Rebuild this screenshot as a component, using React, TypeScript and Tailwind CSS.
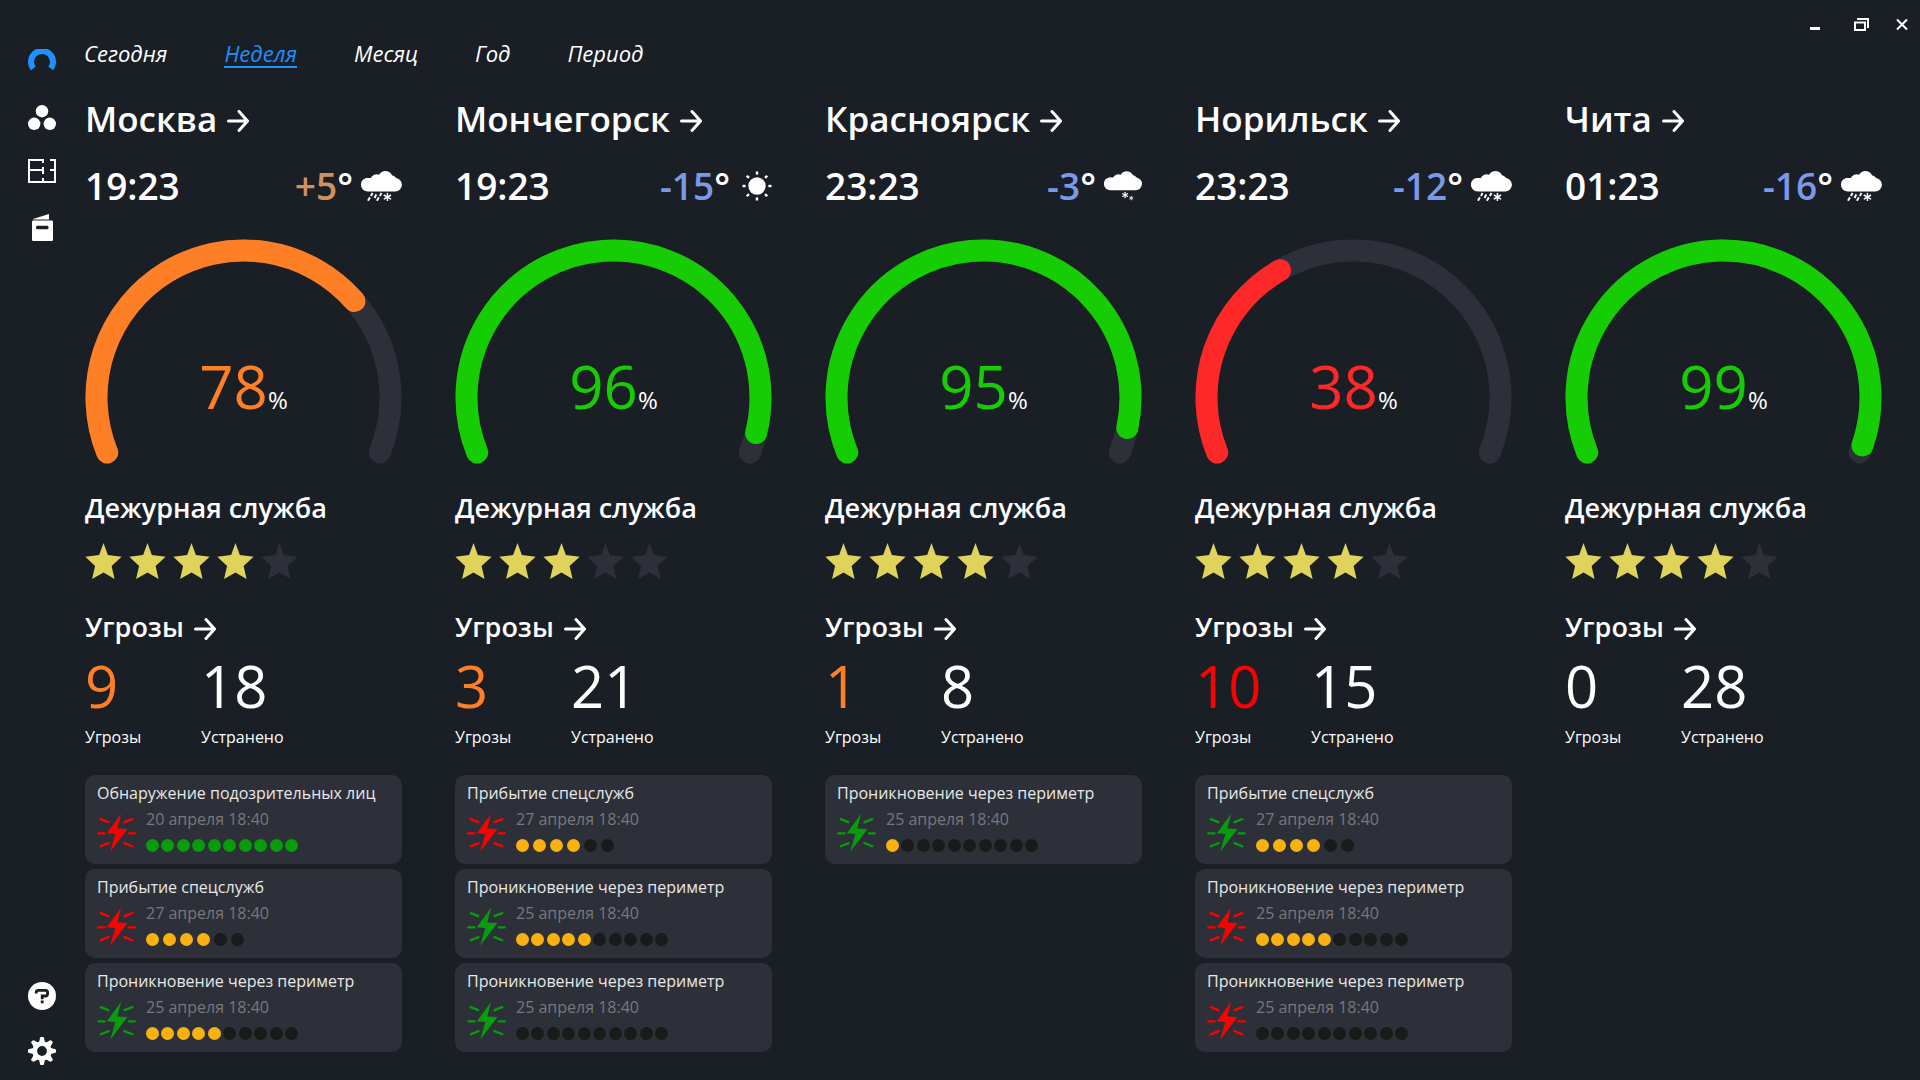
import React from "react";

type Weather = "sleet" | "snow" | "sun";
type Alert = { title: string; date: string; tone: "red" | "green"; total: number; filled: number; done?: boolean };
type City = {
  name: string;
  time: string;
  temp: string;
  warm?: boolean;
  weather: Weather;
  percent: number;
  sweep: number;
  level: "orange" | "green" | "red";
  stars: number;
  threats: number;
  threatColor: string;
  resolved: number;
  alerts: Alert[];
};

const perimeter = (tone: "red" | "green", filled: number): Alert => ({
  title: "Проникновение через периметр",
  date: "25 апреля 18:40",
  tone,
  total: 10,
  filled,
});
const arrival = (tone: "red" | "green"): Alert => ({
  title: "Прибытие спецслужб",
  date: "27 апреля 18:40",
  tone,
  total: 6,
  filled: 4,
});

const cities: City[] = [
  {
    name: "Москва", time: "19:23", temp: "+5", warm: true, weather: "sleet",
    percent: 78, sweep: 161, level: "orange", stars: 4,
    threats: 9, threatColor: "text-[#ff7f27]", resolved: 18,
    alerts: [
      { title: "Обнаружение подозрительных лиц", date: "20 апреля 18:40", tone: "red", total: 10, filled: 10, done: true },
      arrival("red"),
      perimeter("green", 5),
    ],
  },
  {
    name: "Мончегорск", time: "19:23", temp: "-15", weather: "sun",
    percent: 96, sweep: 216, level: "green", stars: 3,
    threats: 3, threatColor: "text-[#ff7f27]", resolved: 21,
    alerts: [arrival("red"), perimeter("green", 5), perimeter("green", 0)],
  },
  {
    name: "Красноярск", time: "23:23", temp: "-3", weather: "snow",
    percent: 95, sweep: 214, level: "green", stars: 4,
    threats: 1, threatColor: "text-[#ff7f27]", resolved: 8,
    alerts: [perimeter("green", 1)],
  },
  {
    name: "Норильск", time: "23:23", temp: "-12", weather: "sleet",
    percent: 38, sweep: 82, level: "red", stars: 4,
    threats: 10, threatColor: "text-[#ff0000]", resolved: 15,
    alerts: [arrival("green"), perimeter("red", 5), perimeter("red", 0)],
  },
  {
    name: "Чита", time: "01:23", temp: "-16", weather: "sleet",
    percent: 99, sweep: 221, level: "green", stars: 4,
    threats: 0, threatColor: "text-white", resolved: 28,
    alerts: [],
  },
];

const strokeByLevel = { orange: "stroke-[#ff7f27]", green: "stroke-[#16cc02]", red: "stroke-[#ff2828]" };
const textByLevel = { orange: "text-[#ff7f27]", green: "text-[#16cc02]", red: "text-[#ff2828]" };

function Arrow() {
  return (
    <svg viewBox="0 0 22 22" className="mt-1 size-[22px] shrink-0" fill="none" stroke="currentColor" strokeWidth="3" strokeLinecap="round" strokeLinejoin="round" aria-hidden="true">
      <path d="M1.5 11H20M12 1.5L20.5 11L12 20.5" />
    </svg>
  );
}

function Flake({ x, y, r }: { x: number; y: number; r: number }) {
  return (
    <g stroke="currentColor" strokeWidth={r / 2.4} strokeLinecap="round">
      {[30, 90, 150].map((a) => {
        const dx = r * Math.cos((a * Math.PI) / 180);
        const dy = r * Math.sin((a * Math.PI) / 180);
        return <line key={a} x1={x - dx} y1={y - dy} x2={x + dx} y2={y + dy} />;
      })}
    </g>
  );
}

function CloudShape() {
  return (
    <g>
      <rect x="0" y="21" width="124" height="41" rx="20.5" />
      <circle cx="20" cy="41" r="20" />
      <circle cx="47" cy="29" r="19" />
      <circle cx="74" cy="22" r="22" />
      <circle cx="92" cy="30" r="17" />
    </g>
  );
}

function WeatherIcon({ kind }: { kind: Weather }) {
  if (kind === "sun") {
    return (
      <svg viewBox="0 0 30 30" className="ml-1 size-[30px]" fill="currentColor" aria-label="Ясно">
        <circle cx="15" cy="15" r="8.7" />
        <g stroke="currentColor" strokeWidth="2.4">
          {[0, 45, 90, 135, 180, 225, 270, 315].map((a) => (
            <line key={a} x1="15" y1="0.5" x2="15" y2="3.6" transform={`rotate(${a} 15 15)`} />
          ))}
        </g>
      </svg>
    );
  }
  if (kind === "snow") {
    return (
      <svg viewBox="0 0 124 97" className="h-[30px] w-[38px]" fill="currentColor" aria-label="Снег">
        <CloudShape />
        <Flake x={69} y={78} r={9} />
        <Flake x={89} y={88} r={6} />
      </svg>
    );
  }
  return (
    <svg viewBox="0 0 124 91" className="h-[30px] w-[41px]" fill="currentColor" aria-label="Дождь со снегом">
      <CloudShape />
      <g stroke="currentColor" strokeWidth="6">
        <path d="M35 67L30 76M27 80L21 90M46 71L41 82M62 67L57 76M54 80L48 90" />
      </g>
      <Flake x={80} y={79} r={11} />
    </svg>
  );
}

const CX = 158.5;
const CY = 158.5;
const R = 147;
const point = (deg: number) => {
  const a = ((202 - deg) * Math.PI) / 180;
  return `${(CX + R * Math.cos(a)).toFixed(2)} ${(CY - R * Math.sin(a)).toFixed(2)}`;
};
const arc = (sweep: number) => `M${point(0)}A${R} ${R} 0 ${sweep > 180 ? 1 : 0} 1 ${point(sweep)}`;

function Gauge({ city }: { city: City }) {
  return (
    <div className="relative mt-[29px]">
      <svg viewBox="0 0 317 226" className="w-full" fill="none" strokeWidth="22" strokeLinecap="round" aria-hidden="true">
        <path d={arc(224)} className="stroke-[#2d3038]" />
        <path d={arc(city.sweep)} className={strokeByLevel[city.level]} />
      </svg>
      <p className="absolute inset-x-0 bottom-[25px] flex items-baseline justify-center leading-[80px]">
        <span className={`text-[60px] ${textByLevel[city.level]}`}>{city.percent}</span>
        <span className="text-[24px]">%</span>
      </p>
    </div>
  );
}

function Stars({ value }: { value: number }) {
  return (
    <div className="mt-[17px] flex gap-[7px]" role="img" aria-label={`${value} из 5`}>
      {[0, 1, 2, 3, 4].map((i) => (
        <svg key={i} viewBox="0 0 108 107" className={i < value ? "h-9 w-[37px] fill-[#e0d35c]" : "h-9 w-[37px] fill-[#2d3038]"}>
          <path d="M54 0L67 36L108 41L78 68L87 107L54 88L20 107L29 68L0 41L41 36Z" />
        </svg>
      ))}
    </div>
  );
}

function AlertCard({ alert }: { alert: Alert }) {
  const on = alert.done ? "bg-[#069c0c]" : "bg-[#f9b10f]";
  return (
    <li className="rounded-[10px] bg-[#2d3038] px-3 pt-[6px] pb-3">
      <h3 className="text-[16px] leading-6 whitespace-nowrap text-[#e8e8e8]">{alert.title}</h3>
      <div className="flex gap-[10px]">
        <svg viewBox="0 0 115 115" className={alert.tone === "red" ? "mt-2 size-[39px] shrink-0 text-[#ff0000]" : "mt-2 size-[39px] shrink-0 text-[#069c0c]"} fill="currentColor" aria-hidden="true">
          <path d="M71 2L60 46L90 47L39 114L54 62L29 60Z" />
          <path d="M11 18L33 27M104 18L81 27M4 60H22M94 60H111M11 98L34 89M81 89L104 98" stroke="currentColor" strokeWidth="7" strokeLinecap="round" />
        </svg>
        <div>
          <p className="mt-[2px] text-[16px] leading-6 whitespace-nowrap text-[#77787b]">{alert.date}</p>
          <div className={alert.total === 6 ? "mt-2 flex w-[98px] justify-between" : "mt-2 flex w-[152px] justify-between"}>
            {Array.from({ length: alert.total }, (_, i) => (
              <span key={i} className={`h-[13px] w-[13px] rounded-full ${i < alert.filled ? on : "bg-[#1a1a1a]"}`} />
            ))}
          </div>
        </div>
      </div>
    </li>
  );
}

function CityColumn({ city }: { city: City }) {
  return (
    <section className="min-w-0">
      <h1>
        <a href="#" className="flex items-center gap-[10px] text-[35px] leading-[48px] font-semibold">
          {city.name}
          <Arrow />
        </a>
      </h1>
      <div className="mt-[19px] flex items-center justify-between text-[37px] leading-[48px] font-semibold">
        <time>{city.time}</time>
        <div className="flex items-center gap-2">
          <span>
            <span className={city.warm ? "text-[#d2905f]" : "text-[#7a99e9]"}>{city.temp}</span>°
          </span>
          <WeatherIcon kind={city.weather} />
        </div>
      </div>
      <Gauge city={city} />
      <h2 className="mt-[25px] text-[27px] leading-9 font-semibold whitespace-nowrap">Дежурная служба</h2>
      <Stars value={city.stars} />
      <h2 className="mt-[30px]">
        <a href="#" className="flex items-center gap-[10px] text-[27px] leading-9 font-semibold">
          Угрозы
          <Arrow />
        </a>
      </h2>
      <dl className="mt-[11px] flex">
        <div className="flex w-[116px] flex-col-reverse">
          <dt className="mt-[9px] text-[16px] leading-6">Угрозы</dt>
          <dd className={`text-[58px] leading-[60px] ${city.threatColor}`}>{city.threats}</dd>
        </div>
        <div className="flex flex-col-reverse">
          <dt className="mt-[9px] text-[16px] leading-6">Устранено</dt>
          <dd className="text-[58px] leading-[60px]">{city.resolved}</dd>
        </div>
      </dl>
      <ul className="mt-[26px] flex flex-col gap-[5px]">
        {city.alerts.map((a, i) => (
          <AlertCard key={i} alert={a} />
        ))}
      </ul>
    </section>
  );
}

function Sidebar() {
  return (
    <aside className="flex w-[84px] shrink-0 flex-col items-center justify-between pt-[49px] pb-[15px]">
      <nav className="flex flex-col items-center">
        <button type="button" aria-label="Главная">
          <svg viewBox="0 0 28 21" className="h-[21px] w-7" fill="none" stroke="#1e90ff" strokeWidth="6">
            <path d="M5.2 19.5A11 11 0 1 1 22.8 19.5" />
          </svg>
        </button>
        <button type="button" aria-label="Объекты" className="mt-[35px]">
          <svg viewBox="0 0 28 25" className="h-[25px] w-7" fill="currentColor">
            <circle cx="14" cy="6.2" r="6.2" />
            <circle cx="6.2" cy="18.8" r="6.2" />
            <circle cx="21.8" cy="18.8" r="6.2" />
          </svg>
        </button>
        <button type="button" aria-label="План" className="mt-[29px]">
          <svg viewBox="0 0 28 24" className="h-6 w-7" fill="none" stroke="currentColor" strokeWidth="2">
            <path d="M16 1H1V23H27V1H22M15 0V4M15 8V15M15 19V23M1 11H15M22 11H27" />
          </svg>
        </button>
        <button type="button" aria-label="Журнал" className="mt-[31px]">
          <svg viewBox="0 0 21 27" className="h-[27px] w-[21px]" fill="currentColor">
            <path d="M1 5L17 0V5.5H1Z" />
            <path fillRule="evenodd" d="M1.2 6.5H19.8Q21 6.5 21 7.7V25.8Q21 27 19.8 27H1.2Q0 27 0 25.8V7.7Q0 6.5 1.2 6.5ZM5 11.7A2 2 0 0 0 5 15.3H15.5A2 2 0 0 0 15.5 11.7Z" />
          </svg>
        </button>
      </nav>
      <div className="flex flex-col items-center gap-[27px]">
        <button type="button" aria-label="Справка">
          <svg viewBox="0 0 28 28" className="size-7">
            <circle cx="14" cy="14" r="14" fill="currentColor" />
            <path d="M8.2 11.5V10.5Q8.2 8.3 10.4 8.3H17.4Q19.6 8.3 19.6 10.5V11.7Q19.6 13.9 17.4 14H14.2V17.2M14.2 18.6V21.3" fill="none" stroke="#1a1e25" strokeWidth="2.8" />
          </svg>
        </button>
        <button type="button" aria-label="Настройки">
          <svg viewBox="0 0 28 28" className="size-7" fill="currentColor">
            <circle cx="14" cy="14" r="7.3" fill="none" stroke="currentColor" strokeWidth="4.8" />
            {[0, 45, 90, 135, 180, 225, 270, 315].map((a) => (
              <path key={a} d="M10.8 6L12.2 0.6Q12.4 0 13 0H15Q15.6 0 15.8 0.6L17.2 6Z" transform={`rotate(${a} 14 14)`} />
            ))}
          </svg>
        </button>
      </div>
    </aside>
  );
}

export default function App() {
  const tabs = ["Сегодня", "Неделя", "Месяц", "Год", "Период"];
  return (
    <div className="flex min-h-screen bg-[#1a1e25] font-['Open_Sans','Noto_Sans',sans-serif] text-white">
      <Sidebar />
      <main className="min-w-0 flex-1">
        <header className="flex items-start justify-between pt-[18px] pr-3">
          <nav className="mt-[22px] flex gap-[57px]">
            {tabs.map((t) => (
              <button
                key={t}
                type="button"
                className={
                  t === "Неделя"
                    ? "border-b-2 border-[#1e90ff] text-[22px] leading-[26px] text-[#1e90ff] italic"
                    : "border-b-2 border-transparent text-[22px] leading-[26px] italic"
                }
              >
                {t}
              </button>
            ))}
          </nav>
          <div className="flex items-center">
            <button type="button" aria-label="Свернуть">
              <svg viewBox="0 0 10 13" className="h-[13px] w-[10px]" fill="currentColor">
                <rect y="9" width="10" height="3" />
              </svg>
            </button>
            <button type="button" aria-label="Развернуть" className="ml-[34px]">
              <svg viewBox="0 0 15 13" className="h-[13px] w-[15px]" fill="none" stroke="currentColor" strokeWidth="2">
                <path d="M1 4.5H11V12H1ZM3 1H14V10" />
              </svg>
            </button>
            <button type="button" aria-label="Закрыть" className="ml-[27px]">
              <svg viewBox="0 0 12 13" className="h-[13px] w-3" fill="none" stroke="currentColor" strokeWidth="2">
                <path d="M1 1.5L11 11.5M11 1.5L1 11.5" />
              </svg>
            </button>
          </div>
        </header>
        <div className="mt-[27px] grid grid-cols-5 gap-x-[53px] pr-[38px] pl-px">
          {cities.map((c) => (
            <CityColumn key={c.name} city={c} />
          ))}
        </div>
      </main>
    </div>
  );
}
